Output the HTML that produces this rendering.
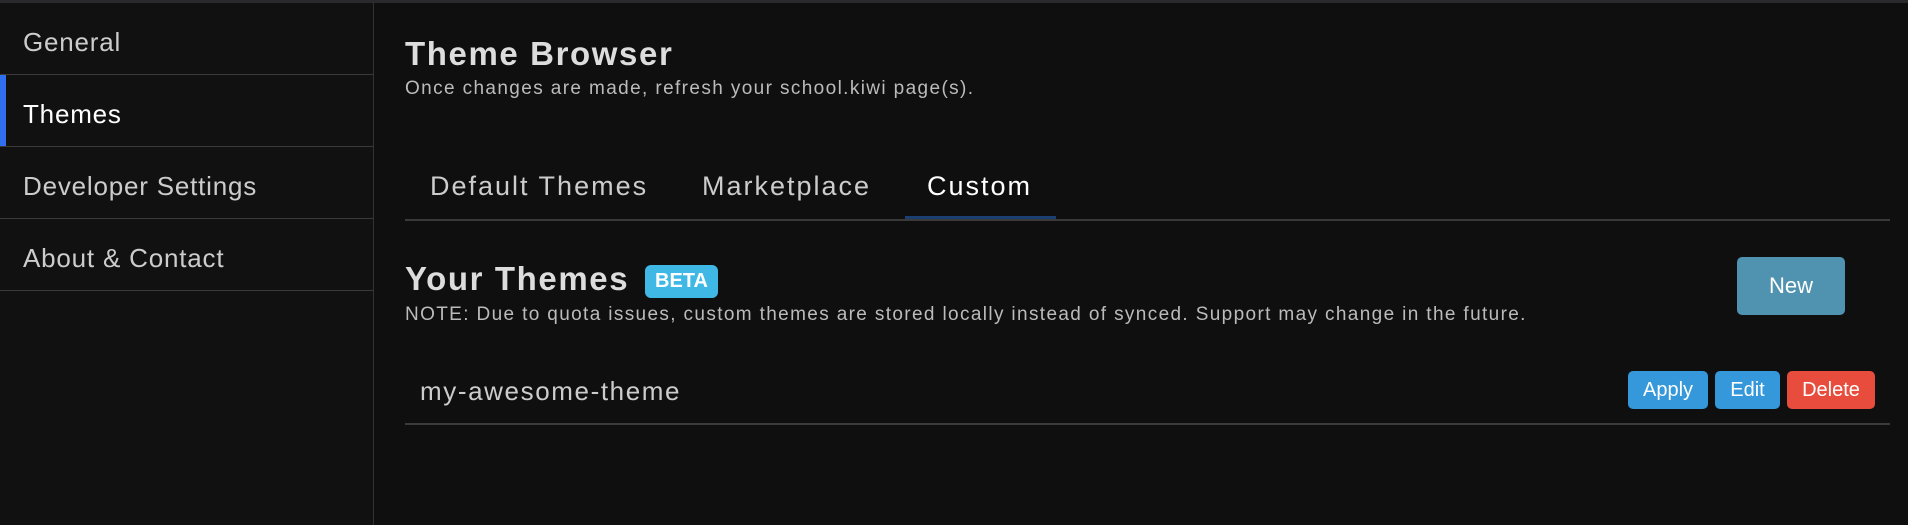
<!DOCTYPE html>
<html><head><meta charset="utf-8"><style>
*{margin:0;padding:0;box-sizing:border-box}
body{width:1908px;height:525px;background:#0f0f0f;font-family:"Liberation Sans",sans-serif;color:#ddd;overflow:hidden;position:relative}
.top{position:absolute;left:0;top:0;width:1908px;height:3px;background:#2a2a2c}
.side{position:absolute;left:0;top:3px;width:374px;height:522px;background:#111;border-right:1px solid #333}
.item{height:72px;border-bottom:1.5px solid #3a3a3a;font-size:26px;color:#ccc;padding-left:23px;padding-top:4px;line-height:70px;position:relative;letter-spacing:0.8px}
.item.act{color:#fff}
.item.act:before{content:"";position:absolute;left:0;top:0;width:6px;height:100%;background:#2f6ff0}
.abs{position:absolute;white-space:nowrap}
h1{font-size:33px;font-weight:bold;color:#ddd;letter-spacing:1.6px}
.sub{font-size:19px;color:#bbb;letter-spacing:1.38px}
.tab{font-size:27px;color:#ccc;letter-spacing:2px}
.btn{position:absolute;color:#fff;font-size:20px;text-align:center;border-radius:5px}
</style></head><body>
<div class="top"></div>
<div class="side">
<div class="item">General</div>
<div class="item act">Themes</div>
<div class="item">Developer Settings</div>
<div class="item">About &amp; Contact</div>
</div>
<h1 class="abs" style="left:405px;top:35px">Theme Browser</h1>
<div class="abs sub" style="left:405px;top:78px">Once changes are made, refresh your school.kiwi page(s).</div>
<div class="abs tab" style="left:430px;top:171px">Default Themes</div>
<div class="abs tab" style="left:702px;top:171px">Marketplace</div>
<div class="abs tab" style="left:927px;top:171px;color:#fff">Custom</div>
<div class="abs" style="left:405px;top:219px;width:1485px;height:1.5px;background:#3a3a3a"></div>
<div class="abs" style="left:905px;top:216px;width:151px;height:3px;background:#1c3f73"></div>
<h1 class="abs" style="left:405px;top:260px">Your Themes</h1>
<div class="abs" style="left:645px;top:265px;width:73px;height:33px;background:#3fb8e6;border-radius:6px;color:#fff;font-weight:bold;font-size:20px;text-align:center;line-height:33px">BETA</div>
<div class="abs sub" style="left:405px;top:304px;letter-spacing:1.36px">NOTE: Due to quota issues, custom themes are stored locally instead of synced. Support may change in the future.</div>
<div class="btn" style="left:1737px;top:257px;width:108px;height:58px;line-height:58px;background:#4f93b0;font-size:22px">New</div>
<div class="abs" style="left:420px;top:376px;font-size:26px;color:#ccc;letter-spacing:1.6px">my-awesome-theme</div>
<div class="btn" style="left:1628px;top:371px;width:80px;height:38px;line-height:38px;background:#3498db">Apply</div>
<div class="btn" style="left:1715px;top:371px;width:65px;height:38px;line-height:38px;background:#3498db">Edit</div>
<div class="btn" style="left:1787px;top:371px;width:88px;height:38px;line-height:38px;background:#e74c3c">Delete</div>
<div class="abs" style="left:405px;top:423px;width:1485px;height:1.5px;background:#3a3a3a"></div>
</body></html>
